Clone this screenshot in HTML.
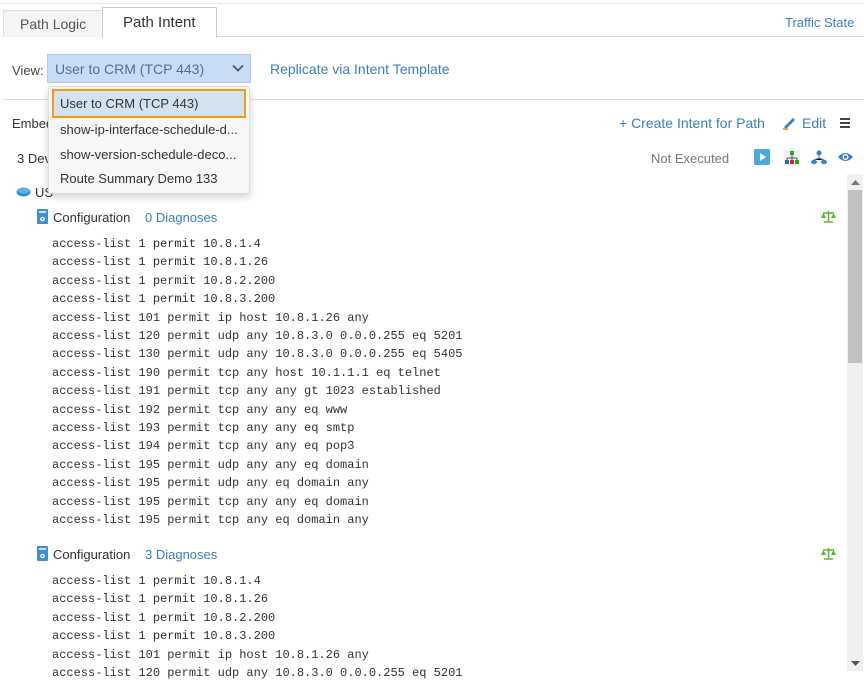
<!DOCTYPE html>
<html><head><meta charset="utf-8"><style>
*{box-sizing:border-box;margin:0;padding:0}
body{width:864px;height:671px;overflow:hidden;background:#fff;font-family:"Liberation Sans",sans-serif;font-size:13px;color:#333;position:relative}
.a{position:absolute;white-space:nowrap}
.blue{color:#3a7fc1}
.code{font-family:"Liberation Mono",monospace;font-size:12px;color:#333;line-height:18.4px;white-space:pre}
</style></head><body>
<div class="a" style="left:0;top:3px;width:864px;height:1px;background:#f3e6d6"></div>
<!-- tabs -->
<div class="a" style="left:3px;top:10px;width:100px;height:27px;background:#f5f5f5;border:1px solid #ddd;border-bottom:none"></div>
<div class="a" style="left:20px;top:16px;font-size:14px;color:#555">Path Logic</div>
<div class="a" style="left:102px;top:7px;width:115px;height:31px;background:#fff;border:1px solid #ccc;border-bottom:none"></div>
<div class="a" style="left:123px;top:14px;font-size:15px;color:#333">Path Intent</div>
<div class="a" style="left:217px;top:36px;width:647px;height:1px;background:#ddd"></div>
<div class="a blue" style="left:785px;top:15px;font-size:13px">Traffic State</div>
<!-- view -->
<div class="a" style="left:12px;top:63px;color:#444">View:</div>
<div class="a" style="left:47px;top:54px;width:204px;height:29px;background:#c9dcf5;border:1px solid #b5cbe8"></div>
<div class="a" style="left:55px;top:61px;font-size:14px;color:#5a6e8a">User to CRM (TCP 443)</div>
<svg class="a" style="left:232px;top:64px" width="12" height="8"><path d="M1 1.5L6 6.5L11 1.5" stroke="#555" stroke-width="1.8" fill="none"/></svg>
<div class="a blue" style="left:270px;top:61px;font-size:14px">Replicate via Intent Template</div>
<div class="a" style="left:3px;top:99px;width:861px;height:1px;background:#ddd"></div>
<!-- row Embed -->
<div class="a" style="left:12px;top:116px">Embed</div>
<div class="a blue" style="left:619px;top:115px;font-size:14px">+ Create Intent for Path</div>
<svg class="a" style="left:782px;top:115px" width="15" height="15"><path d="M2 12L11 3L13 5L4 14Z" fill="#3a7fc1"/><path d="M1 14L6 14" stroke="#f0a030" stroke-width="2"/></svg>
<div class="a blue" style="left:802px;top:115px;font-size:14px">Edit</div>
<div class="a" style="left:840px;top:118px;width:10px;height:2px;background:#444;box-shadow:0 4px 0 #444,0 8px 0 #444"></div>
<div class="a" style="left:17px;top:151px">3 Devices</div>
<div class="a" style="left:651px;top:151px;color:#777">Not Executed</div>
<div class="a" style="left:754px;top:149px;width:16px;height:16px;background:#4aa8e0;border-radius:2px"></div>
<svg class="a" style="left:754px;top:149px" width="16" height="16"><path d="M6 4L12 8L6 12Z" fill="#fff"/></svg>
<svg class="a" style="left:784px;top:150px" width="16" height="16"><rect x="0" y="0" width="16" height="16" fill="#eee"/><rect x="6" y="1" width="4" height="4" fill="#2a2"/><path d="M8 5V8M3 8H13M3 8V10M8 8V10M13 8V10" stroke="#555"/><rect x="1" y="10" width="4" height="4" fill="#36c"/><rect x="6" y="10" width="4" height="4" fill="#d22"/><rect x="11" y="10" width="4" height="4" fill="#2a2"/></svg>
<svg class="a" style="left:811px;top:150px" width="16" height="16"><circle cx="8" cy="3" r="2.5" fill="#3a7fc1"/><path d="M8 5V8M3 10L8 8L13 10" stroke="#3a7fc1"/><ellipse cx="3" cy="12" rx="3" ry="2.2" fill="#3a7fc1"/><ellipse cx="13" cy="12" rx="3" ry="2.2" fill="#3a7fc1"/></svg>
<svg class="a" style="left:837px;top:151px" width="17" height="12"><path d="M1 6Q8.5 -2 16 6Q8.5 14 1 6Z" fill="#3a7fc1"/><circle cx="8.5" cy="6" r="3" fill="#fff"/><circle cx="8.5" cy="6" r="1.6" fill="#3a7fc1"/></svg>
<!-- device -->
<svg class="a" style="left:16px;top:186px" width="15" height="11"><ellipse cx="7.5" cy="6" rx="7" ry="4.5" fill="#2b8fd0"/><ellipse cx="7.5" cy="4.5" rx="6" ry="3" fill="#5cb4e6"/></svg>
<div class="a" style="left:35px;top:185px">US</div>
<!-- config 1 -->
<svg class="a" style="left:37px;top:209px" width="11" height="15"><rect x="0" y="0" width="11" height="15" rx="1" fill="#3a8fd6"/><rect x="2" y="2" width="7" height="2" fill="#cfe6fa"/><circle cx="5.5" cy="10" r="2.3" fill="#fff"/><circle cx="5.5" cy="10" r="1" fill="#3a8fd6"/></svg>
<div class="a" style="left:53px;top:210px">Configuration</div>
<div class="a blue" style="left:145px;top:210px">0 Diagnoses</div>
<svg class="a" style="left:821px;top:210px" width="15" height="13"><path d="M7.5 1V11M3 12H12M2 3H13" stroke="#5ab52b" stroke-width="1.5"/><path d="M0 8L2.5 3L5 8Z M10 8L12.5 3L15 8Z" fill="#5ab52b"/></svg>
<div class="a code" style="left:52px;top:235px">access-list 1 permit 10.8.1.4
access-list 1 permit 10.8.1.26
access-list 1 permit 10.8.2.200
access-list 1 permit 10.8.3.200
access-list 101 permit ip host 10.8.1.26 any
access-list 120 permit udp any 10.8.3.0 0.0.0.255 eq 5201
access-list 130 permit udp any 10.8.3.0 0.0.0.255 eq 5405
access-list 190 permit tcp any host 10.1.1.1 eq telnet
access-list 191 permit tcp any any gt 1023 established
access-list 192 permit tcp any any eq www
access-list 193 permit tcp any any eq smtp
access-list 194 permit tcp any any eq pop3
access-list 195 permit udp any any eq domain
access-list 195 permit udp any eq domain any
access-list 195 permit tcp any any eq domain
access-list 195 permit tcp any eq domain any</div>
<!-- config 2 -->
<svg class="a" style="left:37px;top:546px" width="11" height="15"><rect x="0" y="0" width="11" height="15" rx="1" fill="#3a8fd6"/><rect x="2" y="2" width="7" height="2" fill="#cfe6fa"/><circle cx="5.5" cy="10" r="2.3" fill="#fff"/><circle cx="5.5" cy="10" r="1" fill="#3a8fd6"/></svg>
<div class="a" style="left:53px;top:547px">Configuration</div>
<div class="a blue" style="left:145px;top:547px">3 Diagnoses</div>
<svg class="a" style="left:821px;top:547px" width="15" height="13"><path d="M7.5 1V11M3 12H12M2 3H13" stroke="#5ab52b" stroke-width="1.5"/><path d="M0 8L2.5 3L5 8Z M10 8L12.5 3L15 8Z" fill="#5ab52b"/></svg>
<div class="a code" style="left:52px;top:572px">access-list 1 permit 10.8.1.4
access-list 1 permit 10.8.1.26
access-list 1 permit 10.8.2.200
access-list 1 permit 10.8.3.200
access-list 101 permit ip host 10.8.1.26 any
access-list 120 permit udp any 10.8.3.0 0.0.0.255 eq 5201</div>
<!-- scrollbar -->
<div class="a" style="left:847px;top:174px;width:16px;height:497px;background:#f0f0f0"></div>
<svg class="a" style="left:851px;top:180px" width="9" height="6"><path d="M0 5L4.5 0L9 5Z" fill="#777"/></svg>
<div class="a" style="left:848px;top:190px;width:14px;height:173px;background:#c1c1c1"></div>
<svg class="a" style="left:851px;top:661px" width="9" height="6"><path d="M0 0L4.5 5L9 0Z" fill="#555"/></svg>
<!-- dropdown -->
<div class="a" style="left:48px;top:86px;width:202px;height:108px;background:#f7f7f7;border:1px solid #ddd;border-radius:3px;box-shadow:0 3px 8px rgba(0,0,0,.18)"></div>
<div class="a" style="left:52px;top:89px;width:194px;height:29px;background:#d2e2ee;border:2px solid #f39c12"></div>
<div class="a" style="left:60px;top:96px">User to CRM (TCP 443)</div>
<div class="a" style="left:60px;top:122px">show-ip-interface-schedule-d...</div>
<div class="a" style="left:60px;top:147px">show-version-schedule-deco...</div>
<div class="a" style="left:60px;top:171px">Route Summary Demo 133</div>
</body></html>
